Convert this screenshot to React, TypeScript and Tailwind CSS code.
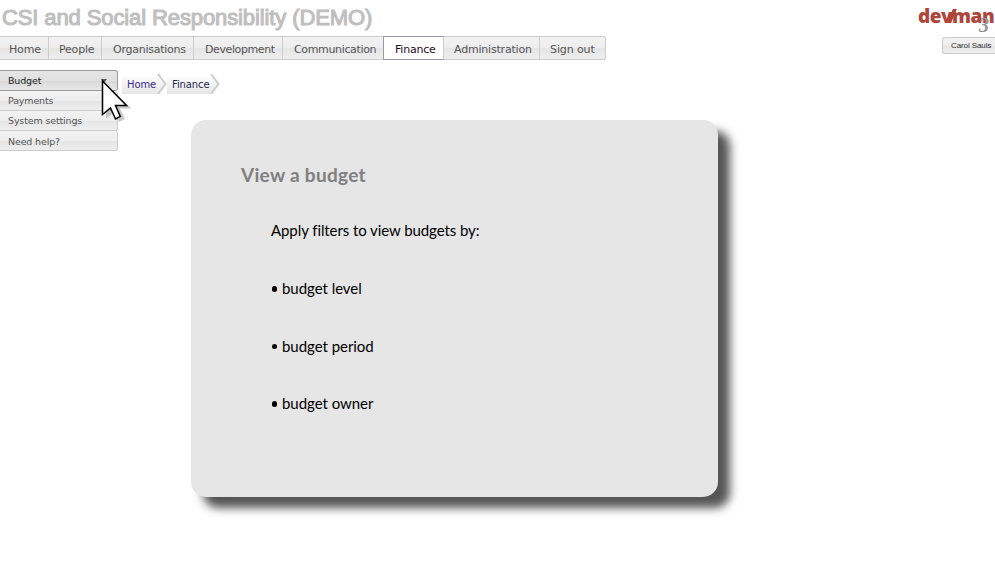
const verdana = "font-['DejaVu_Sans',Verdana,sans-serif]";

const navItems = [
  { label: 'Home', box: 'w-[49px] pl-[9px]', text: 'tracking-[-0.15px]' },
  { label: 'People', box: 'w-[53px] pl-[10px]', text: 'tracking-[-0.2px]' },
  { label: 'Organisations', box: 'w-[92px] pl-[11px]', text: 'tracking-[-0.25px]' },
  { label: 'Development', box: 'w-[89px] pl-[11px]', text: 'tracking-[-0.4px]' },
  { label: 'Communication', box: 'w-[101px] pl-[11px]', text: 'tracking-[-0.35px]' },
  { label: 'Finance', box: 'w-[61px] pl-[11px]', text: 'tracking-[-0.2px]', active: true },
  { label: 'Administration', box: 'w-[96px] pl-[10px]', text: 'tracking-[-0.2px]' },
  { label: 'Sign out', box: 'w-[66px] pl-[10px] rounded-r-[3px]', text: 'tracking-[-0.1px]' },
];

const grey = 'bg-[linear-gradient(#f2f2f2_0%,#eeeeee_50%,#e5e5e5_52%,#eeeeee_100%)]';

function Header() {
  return (
    <header className="flex h-9 justify-between">
      <h1 className="pt-[4px] pl-[2px] font-['Liberation_Sans',Arial,sans-serif] text-[22px] leading-[27px] font-normal tracking-[-0.11px] whitespace-nowrap text-[#bfbfbf] [-webkit-text-stroke:1.1px_#bfbfbf]">
        CSI and Social Responsibility (DEMO)
      </h1>
      <div className="relative w-[77px] pt-[4px] font-['Open_Sans',sans-serif] text-[19px] leading-[24px] font-extrabold tracking-[-0.5px] whitespace-nowrap text-[#b0453b]">
        dev
        <span className="absolute top-[9px] left-[32px] h-[14px] w-[3.5px] -skew-x-[22deg] bg-[#b0453b]" />
        man
        <span className="absolute top-[13px] left-[61px] font-['Liberation_Serif',serif] text-[20px] leading-[24px] font-bold text-[#929292] italic">3</span>
      </div>
    </header>
  );
}

function Nav() {
  return (
    <div className="flex h-6 justify-between">
      <nav className="flex">
        {navItems.map((n) => (
          <div
            key={n.label}
            className={`flex h-6 items-center border-y whitespace-nowrap ${verdana} text-[11px] ${n.box} ${n.text} ${
              n.active
                ? '-ml-px border-l border-r border-[#999aa5] border-r-[#cccccc] bg-white text-[#1d1020]'
                : `border-r border-[#cccccc] text-[#555555] ${grey}`
            }`}
          >
            <span className="pt-[4px]">{n.label}</span>
          </div>
        ))}
      </nav>
      <div className={`mt-px flex h-[17px] w-[53px] items-center rounded-l-[3px] border border-r-0 border-[#cccccc] pl-2 font-['Liberation_Sans',Arial,sans-serif] text-[8px] whitespace-nowrap text-[#333333] ${grey}`}>
        <span className="tracking-[-0.1px]">Carol Sauls</span>
      </div>
    </div>
  );
}

function Sidebar() {
  const row = `flex items-center rounded-r-[3px] border border-l-0 pl-2 ${verdana} text-[9.5px] tracking-[-0.15px]`;
  return (
    <aside className="w-[118px]">
      <div className={`${row} h-[21px] justify-between border-[#999999] bg-[linear-gradient(#e6e6e6_0%,#e0e0e0_50%,#d8d8d8_52%,#e8e8e8_100%)] pr-[10px] text-[#222222]`}>
        <span className="pt-[2px]">Budget</span>
        <span className="border-x-[3px] border-t-[4px] border-x-transparent border-t-[#555555]" />
      </div>
      {['Payments', 'System settings', 'Need help?'].map((t) => (
        <div key={t} className={`${row} h-5 border-t-0 border-[#cccccc] text-[#555555] ${grey}`}>
          <span className={t === 'Need help?' ? 'pt-[3px]' : 'pt-[2px]'}>{t}</span>
        </div>
      ))}
    </aside>
  );
}

function Crumb({ label, box, color }: { label: string; box: string; color: string }) {
  return (
    <div className={`flex h-5 items-center bg-linear-to-b from-white to-[#e6e6e6] ${verdana} text-[10px] tracking-[-0.1px] ${box} ${color}`}>
      <span className="flex-1 pt-px whitespace-nowrap">{label}</span>
      <svg width="10" height="20" viewBox="0 0 10 20" className="shrink-0">
        <path d="M0 0 8 10 0 20H10V0Z" fill="#fff" />
        <path d="M1 0 8.5 10 1 20" fill="none" stroke="#cccccc" strokeWidth="2" />
      </svg>
    </div>
  );
}

function Card() {
  return (
    <section className="mt-[26px] ml-[69px] h-[377px] w-[527px] rounded-[15px] bg-[#e6e6e6] pt-[42px] pl-[50px] font-[Lato,Calibri,sans-serif] shadow-[12px_11px_10px_0px_#555555]">
      <h2 className="text-[19px] leading-[26px] font-bold tracking-[0.3px] text-[#808080]">View a budget</h2>
      <div className="pt-[32px] pl-[30px] text-[15px] leading-5 text-black">
        <p className="tracking-[-0.08px]">Apply filters to view budgets by:</p>
        <ul className="mt-[38px] flex flex-col gap-[37.5px] tracking-[-0.04px]">
          {['budget level', 'budget period', 'budget owner'].map((t) => (
            <li key={t} className="flex h-5 items-center gap-[5px]">
              <span className="mt-[2px] ml-[0.5px] size-[5.5px] rounded-full bg-black" />
              {t}
            </li>
          ))}
        </ul>
      </div>
    </section>
  );
}

function Cursor() {
  return (
    <svg className="absolute top-[78px] left-[100px]" width="36" height="48" viewBox="0 0 36 48">
      <path d="M6 6V40L15 34 19 44 25 41 20 30.500H31.500Z" fill="#aaaaaa" opacity=".65" />
      <path d="M2.500 3V36.500L10.500 30 15.500 41 20.300 38.500 15.500 27.500H26.500Z" fill="#fff" stroke="#000" strokeWidth="1.500" />
    </svg>
  );
}

export default function App() {
  return (
    <div className="relative h-[588px] w-[995px] overflow-hidden bg-white">
      <Header />
      <Nav />
      <div className="flex pt-[10px]">
        <Sidebar />
        <main className="pt-1 pl-1">
          <div className="flex">
            <Crumb label="Home" box="w-[45px] pl-[5px]" color="text-[#3b2a92]" />
            <Crumb label="Finance" box="w-[50px] pl-[5px]" color="text-[#1b2a55]" />
          </div>
          <Card />
        </main>
      </div>
      <Cursor />
    </div>
  );
}
